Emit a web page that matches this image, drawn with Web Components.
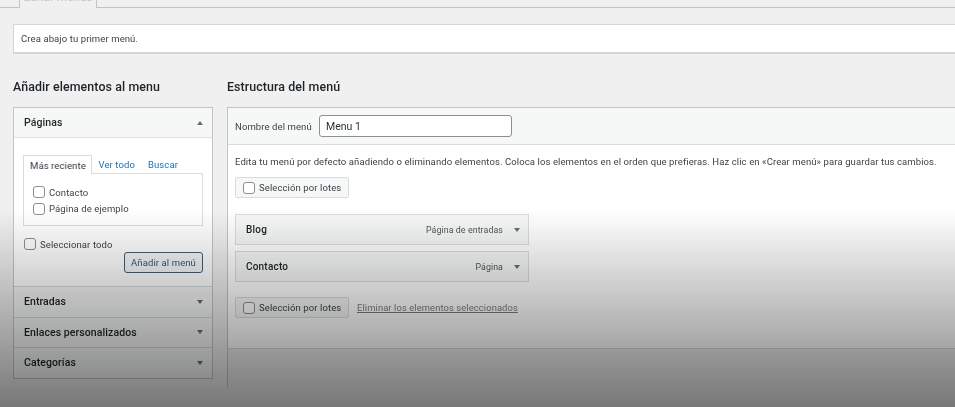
<!DOCTYPE html>
<html lang="es">
<head>
<meta charset="utf-8">
<title>Menús</title>
<style>
  html, body { margin: 0; height: 407px; overflow: hidden; background: #f0f0f1; }
  body { font-family: Roboto, "Liberation Sans", sans-serif; font-size: 9.5px; letter-spacing: .1px; color: #3c434a; }
</style>
</head>
<body>
<wp-page>
  <wp-tabs slot="top" label="Editar menús"></wp-tabs>
  <wp-notice slot="top">Crea abajo tu primer menú.</wp-notice>

  <wp-column slot="left" title="Añadir elementos al menu" style="width:200px">
    <wp-accordion>
      <wp-section label="Páginas" open>
        <wp-picker></wp-picker>
      </wp-section>
      <wp-section label="Entradas"></wp-section>
      <wp-section label="Enlaces personalizados"></wp-section>
      <wp-section label="Categorías"></wp-section>
    </wp-accordion>
  </wp-column>

  <wp-column slot="right" title="Estructura del menú">
    <wp-structure></wp-structure>
  </wp-column>
</wp-page>
<wp-shade></wp-shade>

<script>
  const define = (name, html, init) => {
    customElements.define(name, class extends HTMLElement {
      constructor() {
        super();
        this.attachShadow({ mode: "open" });
        this.shadowRoot.innerHTML = html;
      }
      connectedCallback() {
        if (init) init(this, this.shadowRoot);
      }
    });
  };

  define("wp-page", /*template*/ `
    <style>
      :host { display: block; margin-top: -20px; filter: blur(.3px); }
      #cols { display: flex; gap: 14px; padding: 25px 0 0 13px; }
      #right { display: block; flex: 1; min-width: 0; margin-right: -10px; }
    </style>
    <slot name="top"></slot>
    <div id="cols">
      <slot name="left"></slot>
      <div id="right"><slot name="right"></slot></div>
    </div>
  `);

  define("wp-tabs", /*template*/ `
    <style>
      :host { display: block; height: 27px; border-bottom: 1px solid #c3c4c7; padding-left: 19px; }
      #tab {
        display: inline-block; box-sizing: border-box; width: 78px; height: 28px; padding-top: 9px;
        border: 1px solid #c3c4c7; border-bottom: 0; background: #f0f0f1;
        color: #c9cacc; font-size: 11.5px; font-weight: 500; text-align: center;
      }
    </style>
    <div id="tab"></div>
  `, (el, root) => {
    root.getElementById("tab").textContent = el.getAttribute("label");
  });

  define("wp-notice", /*template*/ `
    <style>
      :host {
        display: block; box-sizing: border-box; height: 30px; margin: 16px -10px 0 13px;
        padding: 0 7px; background: #fff; line-height: 27px;
        border: 1px solid #d4d5d6; border-bottom-width: 2px;
      }
    </style>
    <slot></slot>
  `);

  define("wp-column", /*template*/ `
    <style>
      :host { display: block; flex: none; }
      h2 {
        margin: 0 0 12px; height: 16px; font-size: 12.4px; line-height: 16px; letter-spacing: .1px;
        font-weight: 500; color: #1d2327;
      }
    </style>
    <h2></h2>
    <slot></slot>
  `, (el, root) => {
    root.querySelector("h2").textContent = el.getAttribute("title");
  });

  define("wp-accordion", /*template*/ `
    <style>
      :host { display: block; border: 1px solid #c3c4c7; box-sizing: border-box; width: 200px; background: #fff; }
    </style>
    <slot></slot>
  `);

  define("wp-section", /*template*/ `
    <style>
      :host { display: block; }
      :host(:not(:last-child)) { border-bottom: 1px solid #d6d7d9; }
      #head {
        display: flex; align-items: center; justify-content: space-between; height: 29.6px;
        padding: 0 9.5px 0 10px; background: #f6f7f7; color: #1d2327; font-size: 10.5px; font-weight: 500; letter-spacing: .08px;
      }
      #arrow { width: 0; height: 0; border: 3px solid transparent; border-top: 4px solid #6a6d71; border-bottom: 0; }
      :host([open]) #arrow { border-top: 0; border-bottom: 4px solid #6a6d71; }
      :host([open]) #head { border-bottom: 1px solid #e2e3e4; height: 29px; }
    </style>
    <div id="head"><span id="label"></span><span id="arrow"></span></div>
    <slot></slot>
  `, (el, root) => {
    root.getElementById("label").textContent = el.getAttribute("label");
  });

  define("wp-check", /*template*/ `
    <style>
      :host { display: flex; align-items: center; gap: 4px; height: 16px; color: #3c434a; white-space: nowrap; }
      i { display: block; box-sizing: border-box; width: 12px; height: 12px; border: 1px solid #8c8f94; border-radius: 3px; background: #fff; }
    </style>
    <i></i><slot></slot>
  `);

  define("wp-picker", /*template*/ `
    <style>
      :host { display: block; box-sizing: border-box; height: 148px; padding: 17px 9px 0; background: #fff; }
      #tabs { display: flex; height: 18px; white-space: nowrap; }
      #tabs span { padding: 0 6.5px; line-height: 20px; color: #2271b1; }
      #tabs .on {
        box-sizing: border-box; height: 19px; width: 69px; padding: 0 6px; line-height: 19px; color: #3c434a; position: relative; z-index: 1;
        background: #fff; border: 1px solid #dcdcde; border-bottom: 0;
      }
      #panel {
        box-sizing: border-box; height: 53px; padding: 10px 9px 0; border: 1px solid #dcdcde;
        display: flex; flex-direction: column; gap: 0.5px;
      }
      #all { margin: 10px 0 0 1px; }
      #foot { display: flex; justify-content: flex-end; }
      button {
        box-sizing: border-box; width: 79px; height: 21px; padding: 0; font: inherit; letter-spacing: inherit; border-radius: 3px;
        color: #2f5a80; background: #f3f5f6; border: 1px solid #3a6186;
      }
    </style>
    <div id="tabs"><span class="on">Más reciente</span><span>Ver todo</span><span>Buscar</span></div>
    <div id="panel">
      <wp-check>Contacto</wp-check>
      <wp-check>Página de ejemplo</wp-check>
    </div>
    <wp-check id="all">Seleccionar todo</wp-check>
    <div id="foot"><button>Añadir al menú</button></div>
  `);

  define("wp-bulk", /*template*/ `
    <style>
      :host { display: inline-flex; box-sizing: border-box; align-items: center; width: 114px; height: 21px; padding-left: 7px; background: #f6f7f7; border: 1px solid #dcdcde; border-radius: 2px; }
    </style>
    <wp-check>Selección por lotes</wp-check>
  `);

  define("wp-item", /*template*/ `
    <style>
      :host {
        display: flex; align-items: center; box-sizing: border-box; width: 294px; height: 31px;
        padding: 0 8px 0 10px; background: #f6f7f7; border: 1px solid #dcdcde;
      }
      b { flex: 1; color: #1d2327; font-size: 10px; font-weight: 500; letter-spacing: .2px; }
      span { color: #50575e; font-size: 8.8px; }
      i { margin-left: 11px; width: 0; height: 0; border: 3px solid transparent; border-top: 4px solid #6a6d71; border-bottom: 0; }
    </style>
    <b></b><span></span><i></i>
  `, (el, root) => {
    root.querySelector("b").textContent = el.getAttribute("label");
    root.querySelector("span").textContent = el.getAttribute("kind");
  });

  define("wp-structure", /*template*/ `
    <style>
      :host { display: block; box-sizing: border-box; height: 280px; background: #fff; border: 1px solid #c3c4c7; }
      #head {
        display: flex; align-items: center; box-sizing: border-box; height: 37px; padding: 0 7px;
        background: #f6f7f7; border-bottom: 1px solid #dcdcde;
      }
      label { flex: 0 0 84px; }
      input {
        box-sizing: border-box; width: 193px; height: 22px; padding: 0 6px;
        border: 1px solid #8c8f94; border-radius: 3px; font: inherit; font-size: 10.5px; color: #2c3338; background: #fff; outline: 0;
      }
      #body { padding: 0 7px; height: 203px; box-sizing: border-box; }
      p { margin: 0; padding-top: 10px; height: 32px; box-sizing: border-box; line-height: 14px; white-space: nowrap; }
      #list { display: flex; flex-direction: column; gap: 6px; margin-top: 16px; }
      #foot-bulk { display: flex; align-items: center; gap: 8px; margin-top: 15px; }
      a { color: #787c82; font-size: 9.4px; text-decoration: underline; }
      #foot { height: 38px; background: #ededee; border-top: 1px solid #d6d7d9; }
    </style>
    <div id="head"><label>Nombre del menú</label><input value="Menu 1"></div>
    <div id="body">
      <p>Edita tu menú por defecto añadiendo o eliminando elementos. Coloca los elementos en el orden que prefieras. Haz clic en «Crear menú» para guardar tus cambios.</p>
      <wp-bulk></wp-bulk>
      <div id="list">
        <wp-item label="Blog" kind="Página de entradas"></wp-item>
        <wp-item label="Contacto" kind="Página"></wp-item>
      </div>
      <div id="foot-bulk"><wp-bulk></wp-bulk><a>Eliminar los elementos seleccionados</a></div>
    </div>
    <div id="foot"></div>
  `);

  define("wp-shade", /*template*/ `
    <style>
      :host {
        position: fixed; left: 0; top: 0; width: 955px; height: 407px; pointer-events: none;
        background: linear-gradient(to bottom, rgba(0,0,0,0) 210px, rgba(0,0,0,.5) 407px);
      }
    </style>
  `);
</script>
</body>
</html>
